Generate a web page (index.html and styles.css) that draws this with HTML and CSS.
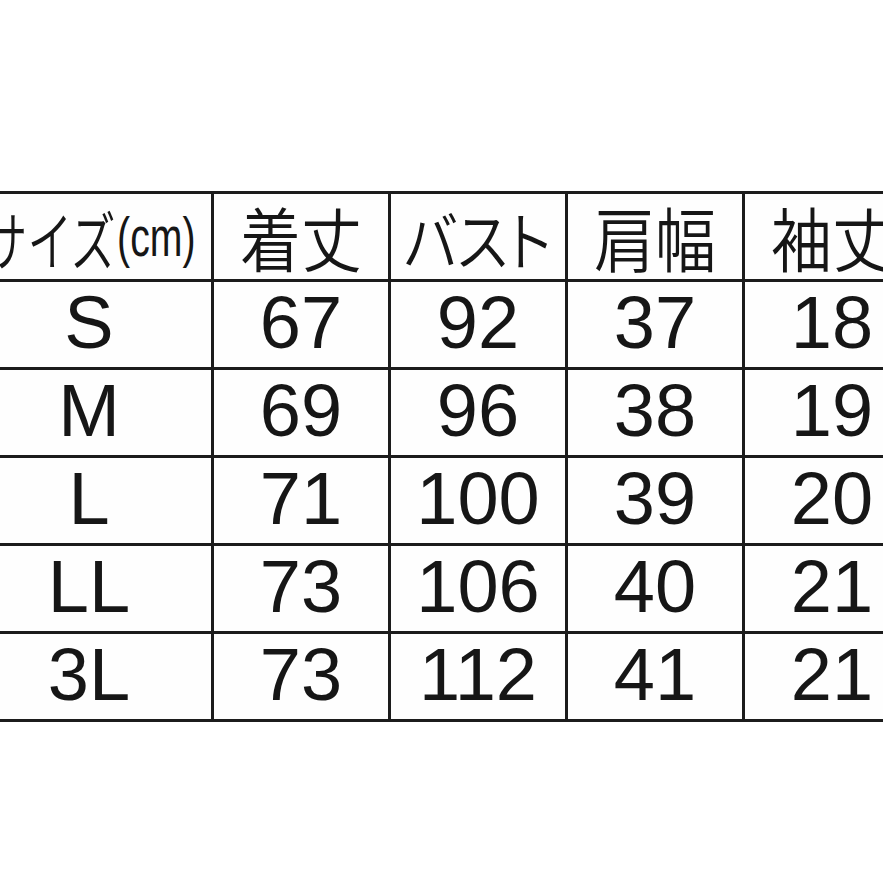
FILE: index.html
```html
<!DOCTYPE html>
<html lang="ja">
<head>
<meta charset="utf-8">
<title>サイズ表</title>
<link rel="stylesheet" href="styles.css">
</head>
<body>
<div class="table">
  <div class="cell head"><span class="size-label"><span class="kana">サイズ</span><span class="unit">(cm)</span></span></div>
  <div class="cell head"><span class="kanji">着丈</span></div>
  <div class="cell head"><span class="kata">バスト</span></div>
  <div class="cell head"><span class="kanji">肩幅</span></div>
  <div class="cell head"><span class="kanji">袖丈</span></div>

  <div class="cell">S</div><div class="cell">67</div><div class="cell">92</div><div class="cell">37</div><div class="cell">18</div>
  <div class="cell">M</div><div class="cell">69</div><div class="cell">96</div><div class="cell">38</div><div class="cell">19</div>
  <div class="cell">L</div><div class="cell">71</div><div class="cell">100</div><div class="cell">39</div><div class="cell">20</div>
  <div class="cell">LL</div><div class="cell">73</div><div class="cell">106</div><div class="cell">40</div><div class="cell">21</div>
  <div class="cell">3L</div><div class="cell">73</div><div class="cell">112</div><div class="cell">41</div><div class="cell">21</div>
</div>
</body>
</html>
```
FILE: styles.css
```css
html, body {
  margin: 0;
  padding: 0;
  background: #ffffff;
  overflow: hidden;
}
body {
  width: 883px;
  height: 883px;
  font-family: "Liberation Sans", Arial, sans-serif;
  color: #161616;
}
.table {
  display: grid;
  grid-template-columns: 244px repeat(4, 174px);
  grid-auto-rows: 85px;
  gap: 3px;
  padding: 3px;
  background: #1c1c1c;
  width: max-content;
  margin-top: 191px;
  margin-left: -36px;
}
.cell {
  background: #fefefe;
  display: flex;
  align-items: center;
  justify-content: center;
  font-size: 74px;
  line-height: 1;
  white-space: nowrap;
  padding-bottom: 3px;
}
.head {
  font-family: "Noto Sans CJK JP", "Noto Sans", sans-serif;
  font-weight: 350;
  padding-bottom: 0;
}
.kanji {
  display: inline-block;
  font-size: 70px;
  line-height: 1;
  transform: scaleX(0.87);
}
.kata {
  display: inline-block;
  font-size: 64px;
  line-height: 1;
  font-feature-settings: "palt";
  transform: scaleX(0.88);
}
.size-label {
  display: inline-flex;
  align-items: center;
  transform: scaleX(0.7);
}
.kana {
  font-size: 64px;
  line-height: 1;
}
.unit {
  font-family: "Liberation Sans", Arial, sans-serif;
  font-weight: 400;
  font-size: 56px;
  line-height: 1;
  margin-left: 2px;
}
```
